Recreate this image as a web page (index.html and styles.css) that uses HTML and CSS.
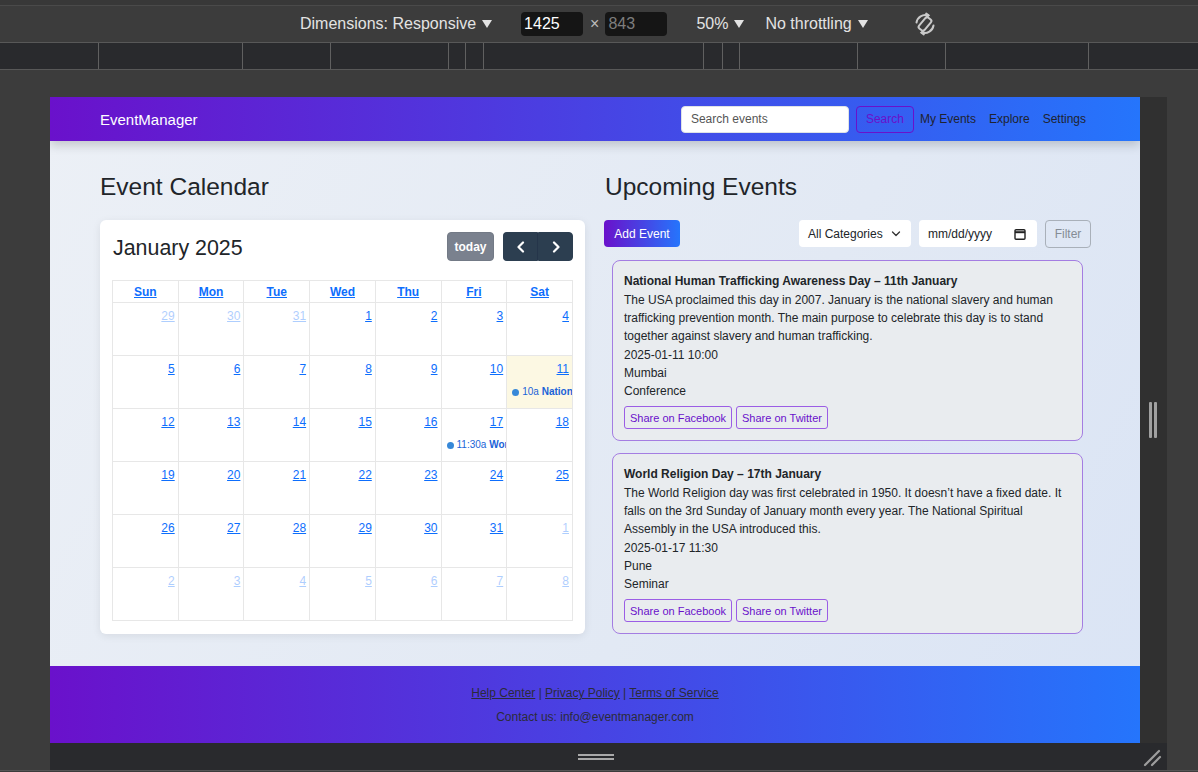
FILE: index.html
```html
<!DOCTYPE html>
<html lang="en">
<head>
<meta charset="utf-8">
<title>EventManager</title>
<link rel="stylesheet" href="styles.css">
</head>
<body>
<div class="dt-topline"></div>
<div class="dt-toolbar">
  <span class="dt-label">Dimensions: Responsive</span><span class="caret"></span>
  <span class="dt-box">1425</span><span class="dt-x">×</span><span class="dt-box dim">843</span>
  <span class="dt-label zoom">50%</span><span class="caret"></span>
  <span class="dt-label throttle">No throttling</span><span class="caret"></span>
  <svg class="rotate" width="28" height="28" viewBox="0 0 28 28" fill="none" stroke="#c9c9c9" stroke-width="2" stroke-linecap="round">
    <rect x="10.5" y="7" width="7" height="14" rx="2" transform="rotate(40 14 14)"/>
    <path d="M5.5 12.5 A9 9 0 0 1 17 5.3"/>
    <path d="M15.2 3.6 L17.6 5.4 L15.4 7.4"/>
    <path d="M22.5 15.5 A9 9 0 0 1 11 22.7"/>
    <path d="M12.8 24.4 L10.4 22.6 L12.6 20.6"/>
  </svg>
</div>
<div class="dt-ruler">
  <span style="width:99px"></span><span style="width:144px"></span><span style="width:88px"></span><span style="width:118px"></span><span style="width:17px"></span><span style="width:18px"></span><span style="width:220px"></span><span style="width:19px"></span><span style="width:17px"></span><span style="width:118px"></span><span style="width:88px"></span><span style="width:143px"></span>
</div>
<div class="dt-gap"></div>
<div class="stage">
  <div class="viewport">
    <header class="site-header">
      <div class="brand">EventManager</div>
      <div class="search-input">Search events</div>
      <button class="search-btn">Search</button>
      <nav class="nav">
        <a href="#">My Events</a>
        <a href="#">Explore</a>
        <a href="#">Settings</a>
      </nav>
    </header>

    <main class="main">
      <section class="col">
        <h2 class="section-title">Event Calendar</h2>
        <div class="cal-card">
          <div class="cal-toolbar">
            <div class="cal-title">January 2025</div>
            <button class="btn-today">today</button>
            <div class="btn-group">
              <button class="btn-nav"><svg width="10" height="12" viewBox="0 0 10 12" fill="none" stroke="#fff" stroke-width="2.2" stroke-linecap="round" stroke-linejoin="round"><path d="M7 1.5 L2.5 6 L7 10.5"/></svg></button>
              <button class="btn-nav"><svg width="10" height="12" viewBox="0 0 10 12" fill="none" stroke="#fff" stroke-width="2.2" stroke-linecap="round" stroke-linejoin="round"><path d="M3 1.5 L7.5 6 L3 10.5"/></svg></button>
            </div>
          </div>
          <table class="cal">
            <thead>
              <tr><th><a href="#">Sun</a></th><th><a href="#">Mon</a></th><th><a href="#">Tue</a></th><th><a href="#">Wed</a></th><th><a href="#">Thu</a></th><th><a href="#">Fri</a></th><th><a href="#">Sat</a></th></tr>
            </thead>
            <tbody>
              <tr>
                <td class="other"><div class="num"><a href="#">29</a></div></td>
                <td class="other"><div class="num"><a href="#">30</a></div></td>
                <td class="other"><div class="num"><a href="#">31</a></div></td>
                <td><div class="num"><a href="#">1</a></div></td>
                <td><div class="num"><a href="#">2</a></div></td>
                <td><div class="num"><a href="#">3</a></div></td>
                <td><div class="num"><a href="#">4</a></div></td>
              </tr>
              <tr>
                <td><div class="num"><a href="#">5</a></div></td>
                <td><div class="num"><a href="#">6</a></div></td>
                <td><div class="num"><a href="#">7</a></div></td>
                <td><div class="num"><a href="#">8</a></div></td>
                <td><div class="num"><a href="#">9</a></div></td>
                <td><div class="num"><a href="#">10</a></div></td>
                <td class="today"><div class="num"><a href="#">11</a></div><div class="ev"><span class="dot"></span><span class="ev-text">10a <b>National Human Trafficking Awareness Day</b></span></div></td>
              </tr>
              <tr>
                <td><div class="num"><a href="#">12</a></div></td>
                <td><div class="num"><a href="#">13</a></div></td>
                <td><div class="num"><a href="#">14</a></div></td>
                <td><div class="num"><a href="#">15</a></div></td>
                <td><div class="num"><a href="#">16</a></div></td>
                <td><div class="num"><a href="#">17</a></div><div class="ev"><span class="dot"></span><span class="ev-text">11:30a <b>World Religion Day</b></span></div></td>
                <td><div class="num"><a href="#">18</a></div></td>
              </tr>
              <tr>
                <td><div class="num"><a href="#">19</a></div></td>
                <td><div class="num"><a href="#">20</a></div></td>
                <td><div class="num"><a href="#">21</a></div></td>
                <td><div class="num"><a href="#">22</a></div></td>
                <td><div class="num"><a href="#">23</a></div></td>
                <td><div class="num"><a href="#">24</a></div></td>
                <td><div class="num"><a href="#">25</a></div></td>
              </tr>
              <tr>
                <td><div class="num"><a href="#">26</a></div></td>
                <td><div class="num"><a href="#">27</a></div></td>
                <td><div class="num"><a href="#">28</a></div></td>
                <td><div class="num"><a href="#">29</a></div></td>
                <td><div class="num"><a href="#">30</a></div></td>
                <td><div class="num"><a href="#">31</a></div></td>
                <td class="other"><div class="num"><a href="#">1</a></div></td>
              </tr>
              <tr>
                <td class="other"><div class="num"><a href="#">2</a></div></td>
                <td class="other"><div class="num"><a href="#">3</a></div></td>
                <td class="other"><div class="num"><a href="#">4</a></div></td>
                <td class="other"><div class="num"><a href="#">5</a></div></td>
                <td class="other"><div class="num"><a href="#">6</a></div></td>
                <td class="other"><div class="num"><a href="#">7</a></div></td>
                <td class="other"><div class="num"><a href="#">8</a></div></td>
              </tr>
            </tbody>
          </table>
        </div>
      </section>

      <section class="col">
        <h2 class="section-title">Upcoming Events</h2>
        <div class="controls">
          <button class="btn-add">Add Event</button>
          <div class="spacer"></div>
          <div class="select">All Categories
            <svg width="10" height="6" viewBox="0 0 10 6" fill="none" stroke="#333" stroke-width="1.3" stroke-linecap="round" stroke-linejoin="round"><path d="M1.5 1 L5 4.5 L8.5 1"/></svg>
          </div>
          <div class="date">mm/dd/yyyy
            <svg width="12" height="12" viewBox="0 0 12 12" fill="none" stroke="#222" stroke-width="1.4"><rect x="1" y="1.7" width="10" height="9.6" rx="1"/><path d="M1 4.2 H11" stroke-width="2"/></svg>
          </div>
          <button class="btn-filter">Filter</button>
        </div>

        <article class="ev-card">
          <h3 class="ev-title">National Human Trafficking Awareness Day – 11th January</h3>
          <p class="ev-desc">The USA proclaimed this day in 2007. January is the national slavery and human trafficking prevention month. The main purpose to celebrate this day is to stand together against slavery and human trafficking.</p>
          <div class="ev-line">2025-01-11 10:00</div>
          <div class="ev-line">Mumbai</div>
          <div class="ev-line">Conference</div>
          <div class="share">
            <button class="btn-share">Share on Facebook</button>
            <button class="btn-share">Share on Twitter</button>
          </div>
        </article>

        <article class="ev-card">
          <h3 class="ev-title">World Religion Day – 17th January</h3>
          <p class="ev-desc">The World Religion day was first celebrated in 1950. It doesn’t have a fixed date. It falls on the 3rd Sunday of January month every year. The National Spiritual Assembly in the USA introduced this.</p>
          <div class="ev-line">2025-01-17 11:30</div>
          <div class="ev-line">Pune</div>
          <div class="ev-line">Seminar</div>
          <div class="share">
            <button class="btn-share">Share on Facebook</button>
            <button class="btn-share">Share on Twitter</button>
          </div>
        </article>
      </section>
    </main>

    <footer class="site-footer">
      <p><a href="#">Help Center</a> | <a href="#">Privacy Policy</a> | <a href="#">Terms of Service</a></p>
      <p class="contact">Contact us: info@eventmanager.com</p>
    </footer>
  </div>
  <div class="side-handle"><div class="grip-v"><span></span><span></span></div></div>
</div>
<div class="dt-bottom">
  <div class="grip-h"><span></span><span></span></div>
  <svg class="resize" width="20" height="20" viewBox="0 0 20 20" stroke="#9d9d9d" stroke-width="2.2" stroke-linecap="round"><path d="M2 18 L16 4"/><path d="M9 18 L17 10"/></svg>
</div>
<div class="dt-endline"></div>
</body>
</html>
```

FILE: styles.css
```css
* { box-sizing: border-box; }
html, body { margin: 0; padding: 0; }
body {
  width: 1198px;
  height: 772px;
  overflow: hidden;
  background: #3c3c3c;
  font-family: "Liberation Sans", Arial, sans-serif;
}

/* ---------- devtools chrome ---------- */
.dt-topline { height: 6px; border-bottom: 1px solid #4a4a4a; background: #383838; }
.dt-toolbar {
  height: 36px;
  display: flex;
  align-items: center;
  padding-left: 300px;
  color: #e3e3e3;
  font-size: 16px;
}
.dt-label { white-space: nowrap; }
.caret {
  width: 0; height: 0;
  border-left: 5px solid transparent;
  border-right: 5px solid transparent;
  border-top: 8px solid #e3e3e3;
  margin-left: 6px;
}
.dt-box {
  width: 62px; height: 24px;
  background: #151515;
  border-radius: 4px;
  color: #fff;
  line-height: 24px;
  padding-left: 3px;
  margin-left: 29px;
}
.dt-box.dim { color: #7d7d7d; margin-left: 0; }
.dt-x { margin: 0 6px 0 7px; color: #bdbdbd; }
.zoom { margin-left: 29px; }
.throttle { margin-left: 21px; }
.rotate { margin-left: 43px; }

.dt-ruler {
  height: 28px;
  display: flex;
  background: #292a2d;
  border-top: 1px solid #585858;
  border-bottom: 1px solid #585858;
}
.dt-ruler span { display: block; height: 100%; border-right: 1px solid #606060; flex: none; }
.dt-gap { height: 27px; }

.stage { display: flex; height: 646px; margin-left: 50px; }
.viewport {
  width: 1090px;
  height: 646px;
  overflow: hidden;
  background: linear-gradient(120deg, #ecf0f6 0%, #e2e9f4 60%, #dae4f5 100%);
  color: #212529;
  font-family: "Liberation Sans", Arial, sans-serif;
  font-size: 12px;
}
.side-handle {
  width: 27px;
  background: #303030;
  display: flex;
  align-items: center;
}
.grip-v { display: flex; gap: 2px; margin-left: 9px; }
.grip-v span { width: 3px; height: 36px; background: #a0a0a0; border-radius: 1px; }

.dt-bottom {
  margin-left: 50px;
  width: 1117px;
  height: 27px;
  background: #292a2d;
  display: flex;
  align-items: center;
}
.grip-h { margin-left: 528px; display: flex; flex-direction: column; gap: 2px; }
.grip-h span { width: 36px; height: 2px; background: #a9a9a9; }
.resize { margin-left: auto; margin-right: 4px; }
.dt-endline { height: 1px; background: #555; }

/* ---------- site ---------- */
.site-header {
  height: 44px;
  display: flex;
  align-items: center;
  padding: 0 54px 0 50px;
  background: linear-gradient(90deg, #6a11cb 0%, #2575fc 100%);
  box-shadow: 0 4px 10px rgba(0, 0, 0, 0.18);
  position: relative;
  z-index: 1;
}
.brand { flex: 1; color: #fff; font-size: 15px; }
.search-input {
  width: 168px; height: 27px;
  background: #fff;
  border: 1px solid #dee2e6;
  border-radius: 4px;
  padding-left: 9px;
  line-height: 25px;
  color: #555;
  font-size: 12px;
}
.search-btn {
  margin-left: 7px;
  width: 58px; height: 27px;
  border: 1px solid #6a11cb;
  border-radius: 4px;
  background: transparent;
  color: #6a11cb;
  font: 12px "Liberation Sans", Arial, sans-serif;
  padding: 0;
}
.nav { display: flex; margin-left: 6px; gap: 13px; }
.nav a { color: #1f2330; text-decoration: none; font-size: 12px; }

.main {
  display: grid;
  grid-template-columns: 1fr 1fr;
  gap: 20px;
  padding: 33px 50px 32px;
}
.section-title {
  margin: 0 0 20px;
  font-size: 24.5px;
  line-height: 26px;
  font-weight: 400;
  color: #212529;
}

.cal-card {
  background: #fff;
  border-radius: 6px;
  box-shadow: 0 2px 8px rgba(0, 0, 0, 0.08);
  padding: 12px 12px 13px;
}
.cal-toolbar { display: flex; align-items: center; height: 29px; margin-bottom: 19px; }
.cal-title { flex: 1; font-size: 21.4px; color: #212529; padding: 3px 0 0 1px; }
.btn-today {
  width: 47px; height: 29px;
  background: #7a818e;
  border: 1px solid #737a86;
  border-radius: 4px;
  color: #fff;
  font: bold 12px "Liberation Sans", Arial, sans-serif;
  padding: 0;
  margin-right: 9px;
}
.btn-group { display: flex; }
.btn-nav {
  width: 35px; height: 29px;
  background: #2c3e50;
  border: 1px solid #2c3e50;
  display: flex; align-items: center; justify-content: center;
  padding: 0;
}
.btn-nav:first-child { border-radius: 4px 0 0 4px; border-right-color: #25354a; }
.btn-nav:last-child { border-radius: 0 4px 4px 0; }

.cal {
  width: 100%;
  border-collapse: collapse;
  table-layout: fixed;
}
.cal th, .cal td { border: 1px solid #e7e7e7; padding: 0; }
.cal th { height: 22px; font-size: 12px; font-weight: bold; text-align: center; }
.cal th a, .cal .num a { color: #0d6efd; text-decoration: underline; }
.cal td { height: 53px; vertical-align: top; }
.cal .num { text-align: right; padding: 6px 3px 0; font-size: 12px; line-height: 14px; }
.cal td.other .num a { color: #0d6efd; opacity: 0.33; }
.cal td.today { background: #fcf8e3; }
.ev {
  display: flex;
  align-items: center;
  margin-top: 9px;
  padding-left: 5px;
  white-space: nowrap;
  overflow: hidden;
  font-size: 10px;
  line-height: 14px;
  color: #1a63d8;
}
.ev-text { flex: 1; min-width: 0; overflow: hidden; }
.dot { width: 7px; height: 7px; border-radius: 50%; background: #3788d8; margin-right: 3px; flex: none; }

.controls { display: flex; align-items: center; height: 27px; margin-bottom: 13px; }
.btn-add {
  width: 76px; height: 27px;
  margin-left: -1px;
  background: linear-gradient(90deg, #6a11cb, #2575fc);
  border: none;
  border-radius: 4px;
  color: #fff;
  font: 12px "Liberation Sans", Arial, sans-serif;
  padding: 0;
}
.spacer { flex: 1; }
.select, .date {
  height: 27px;
  background: #fff;
  border-radius: 4px;
  display: flex;
  align-items: center;
  justify-content: space-between;
  font-size: 12px;
  color: #212529;
}
.select { width: 112px; padding: 0 10px 0 9px; }
.date { width: 118px; margin-left: 8px; padding: 0 11px 0 9px; }
.btn-filter {
  width: 46px; height: 28px;
  margin-left: 8px;
  margin-right: -1px;
  background: transparent;
  border: 1px solid #a9b0b9;
  border-radius: 4px;
  color: #858c95;
  font: 12px "Liberation Sans", Arial, sans-serif;
  padding: 0;
}

.ev-card {
  margin: 0 7px 12px 7px;
  background: #e9ecef;
  border: 1px solid #a47de2;
  border-radius: 8px;
  padding: 11px 11px 11px;
  font-size: 12px;
  line-height: 18px;
  color: #212529;
}
.ev-card:last-child { margin-bottom: 0; }
.ev-title { margin: 0 0 1px; font-size: 12px; line-height: 18px; font-weight: bold; }
.ev-desc { margin: 0 0 1px; }
.share { display: flex; gap: 4px; margin-top: 6px; }
.btn-share {
  height: 23px;
  padding: 0 5px;
  background: transparent;
  border: 1px solid #9b5de5;
  border-radius: 3px;
  color: #6a11cb;
  font: 11px "Liberation Sans", Arial, sans-serif;
}

.site-footer {
  height: 120px;
  background: linear-gradient(90deg, #6a11cb 0%, #2575fc 100%);
  text-align: center;
  padding-top: 18px;
  font-size: 12px;
  line-height: 18px;
  color: #2b2b3a;
}
.site-footer p { margin: 0; }
.site-footer a { color: #2b2b3a; text-decoration: underline; }
.site-footer .contact { margin-top: 6px; }
```
